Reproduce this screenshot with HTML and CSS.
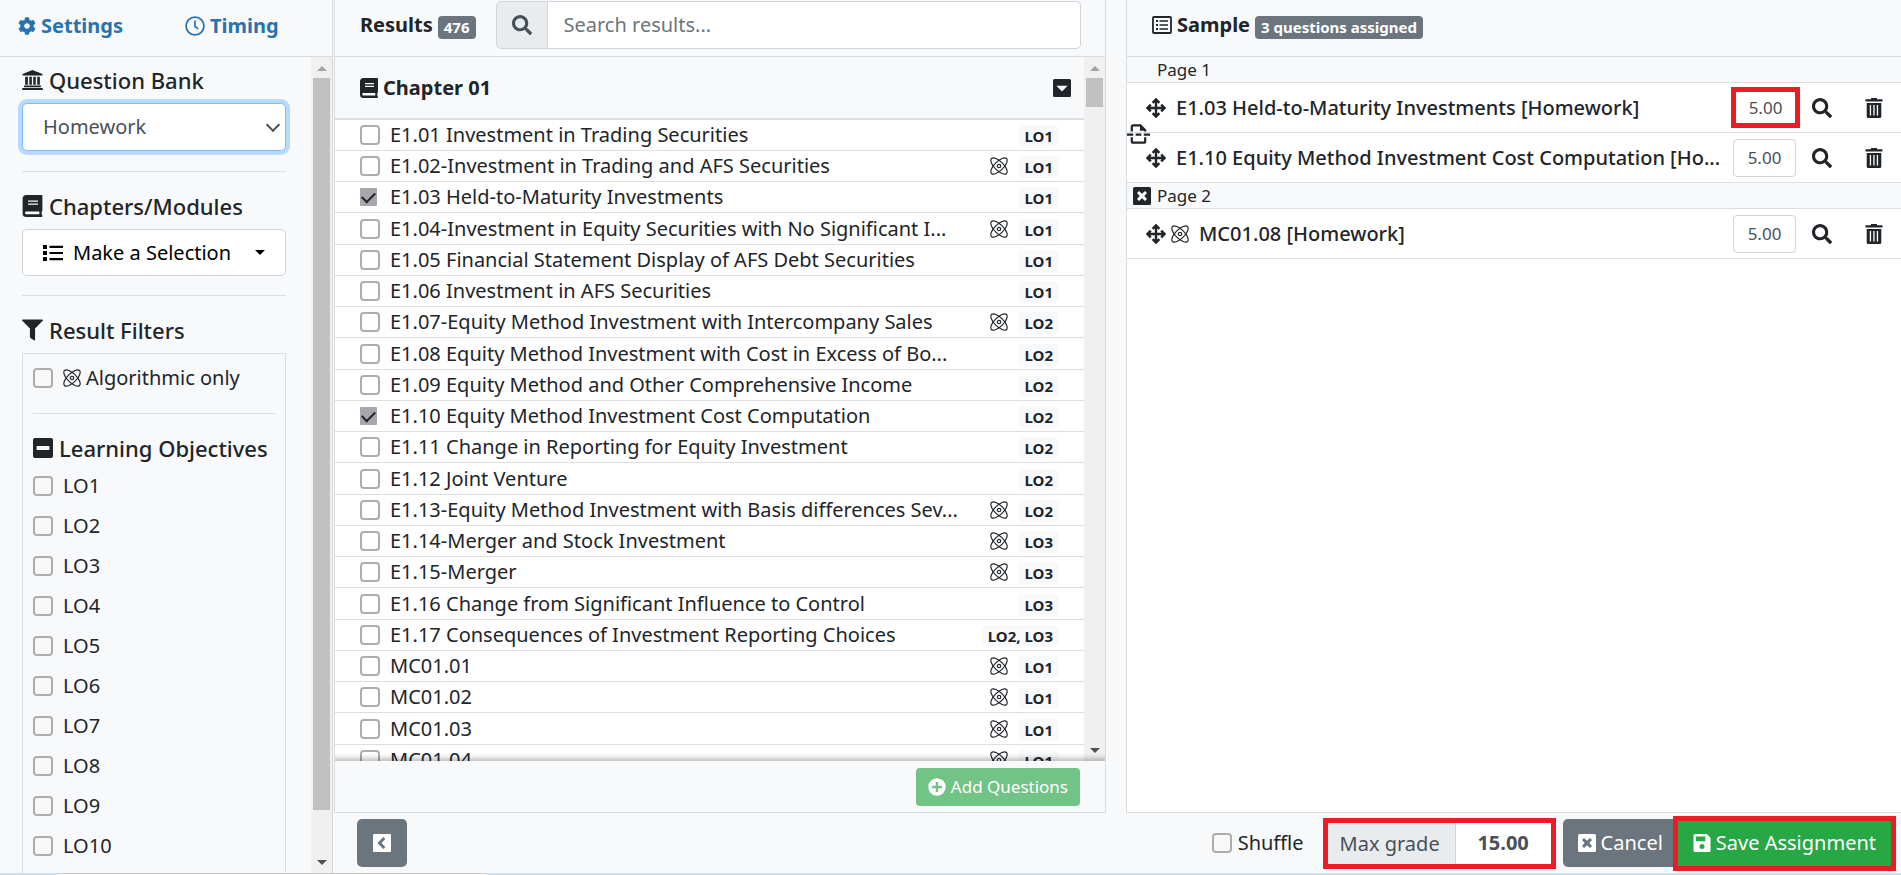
FILE: index.html
```
<!DOCTYPE html>
<html lang="en">
<head>
  <meta charset="utf-8">
  <meta name="viewport" content="width=device-width, initial-scale=1">
  <title>Assignment Builder</title>
  <link rel="stylesheet" href="styles.css">
</head>
<body>
  <!-- icon sprite -->
  <svg class="sprite" aria-hidden="true">
    <symbol id="cog" viewBox="0 0 512 512"><path d="M487.4 315.7l-42.6-24.6c4.3-23.2 4.3-47 0-70.2l42.6-24.6c4.9-2.8 7.1-8.6 5.5-14-11.1-35.6-30-67.8-54.7-94.6-3.8-4.1-10-5.1-14.8-2.3L380.8 110c-17.9-15.4-38.5-27.3-60.8-35.1V25.8c0-5.6-3.9-10.5-9.4-11.7-36.7-8.2-74.3-7.8-109.2 0-5.5 1.2-9.4 6.1-9.4 11.7V75c-22.2 7.9-42.8 19.8-60.8 35.1L88.7 85.5c-4.9-2.8-11-1.9-14.8 2.3-24.7 26.7-43.6 58.9-54.7 94.6-1.7 5.4.6 11.2 5.5 14L67.3 221c-4.3 23.2-4.3 47 0 70.2l-42.6 24.6c-4.9 2.8-7.1 8.6-5.5 14 11.1 35.6 30 67.8 54.7 94.6 3.8 4.1 10 5.1 14.8 2.3l42.6-24.6c17.9 15.4 38.5 27.3 60.8 35.1v49.2c0 5.6 3.9 10.5 9.4 11.7 36.7 8.2 74.3 7.8 109.2 0 5.5-1.2 9.4-6.1 9.4-11.7v-49.2c22.2-7.9 42.8-19.8 60.8-35.1l42.6 24.6c4.9 2.8 11 1.9 14.8-2.3 24.7-26.7 43.6-58.9 54.7-94.6 1.5-5.500-.7-11.300-5.600-14.100zM256 336c-44.1 0-80-35.9-80-80s35.9-80 80-80 80 35.9 80 80-35.9 80-80 80z"/></symbol>
    <symbol id="clock" viewBox="0 0 20 20"><circle cx="10" cy="10" r="8.9" fill="none" stroke="currentColor" stroke-width="1.8"/><path d="M10 4.500v6l3.300 2.400" fill="none" stroke="currentColor" stroke-width="1.700"/></symbol>
    <symbol id="bank" viewBox="0 0 20 20"><path d="M10 .5L19.500 4.200v1.500H.5V4.200zM3 7h2.600v7.500H3zM7 7h2.400v7.500H7zM10.700 7h2.400v7.500h-2.400zM14.500 7H17v7.500h-2.500zM2 15.300h16v1.500H2zM.2 17.700h19.600v1.800H.2z"/></symbol>
    <symbol id="book" viewBox="0 0 18 20"><path fill-rule="evenodd" d="M3.500 0h13.300c.7 0 1.200.5 1.200 1.200v12.600c0 .5-.2.800-.5 1-.3.900-.3 2.200 0 3.100.3.300.5.500.5.900v.2c0 .6-.5 1-1.200 1H3.500A3.500 3.500 0 0 1 0 16.500v-13A3.500 3.500 0 0 1 3.500 0zM5 5v1.200h9V5zM5 7.700v1.200h9V7.700zM3.500 15a1.300 1.300 0 0 0 0 2.600h11.800c-.1-.8-.1-1.700 0-2.600z"/></symbol>
    <symbol id="list" viewBox="0 0 20 17"><path d="M0 .5h4v4H0zM0 6.500h4v4H0zM0 12.500h4v4H0zM6.500 1.200h13.500v2.200H6.500zM6.500 7.400h13.500v2.200H6.500zM6.500 13.500h13.500v2.200H6.500z"/></symbol>
    <symbol id="filter" viewBox="0 0 22 22"><path d="M.8 0h20.400c.8 0 1 .8.5 1.400L13.700 9.500v11.600c0 .8-.7 1.100-1.300.7l-3.500-2.500c-.4-.3-.6-.6-.6-1.100V9.500L.3 1.400C-.2.800 0 0 .8 0z"/></symbol>
    <symbol id="atom" viewBox="0 0 20 20"><g fill="none" stroke="currentColor" stroke-width="1.300"><ellipse cx="10" cy="10" rx="11.800" ry="5" transform="rotate(45 10 10)"/><ellipse cx="10" cy="10" rx="11.800" ry="5" transform="rotate(-45 10 10)"/><circle cx="10" cy="10" r="1.900"/></g></symbol>
    <symbol id="minus-square" viewBox="0 0 20 20"><path fill-rule="evenodd" d="M2 0h16a2 2 0 0 1 2 2v16a2 2 0 0 1-2 2H2a2 2 0 0 1-2-2V2a2 2 0 0 1 2-2zM3.600 8v4h12.800V8z"/></symbol>
    <symbol id="search" viewBox="0 0 512 512"><path d="M505 442.7L405.3 343c-4.5-4.5-10.6-7-17-7H372c27.6-35.3 44-79.7 44-128C416 93.1 322.9 0 208 0S0 93.1 0 208s93.1 208 208 208c48.3 0 92.7-16.4 128-44v16.3c0 6.4 2.5 12.5 7 17l99.7 99.700c9.4 9.4 24.6 9.4 33.9 0l28.3-28.3c9.4-9.4 9.4-24.6.1-34zM208 336c-70.7 0-128-57.200-128-128 0-70.7 57.200-128 128-128 70.7 0 128 57.200 128 128 0 70.7-57.200 128-128 128z"/></symbol>
    <symbol id="caret-square" viewBox="0 0 18 18"><path fill-rule="evenodd" d="M1.500 0h15A1.500 1.500 0 0 1 18 1.500v15a1.500 1.500 0 0 1-1.500 1.500h-15A1.500 1.500 0 0 1 0 16.500v-15A1.500 1.500 0 0 1 1.500 0zM3.400 6.800L9 12.600l5.600-5.800z"/></symbol>
    <symbol id="list-alt" viewBox="0 0 20 18"><rect x="1" y="1" width="18" height="16" rx="1" fill="none" stroke="currentColor" stroke-width="1.800"/><path d="M4 4h2v2H4zM4 8h2v2H4zM4 12h2v2H4zM7.500 4.200H16v1.500H7.500zM7.500 8.200H16v1.500H7.500zM7.500 12.200H16v1.500H7.500z"/></symbol>
    <symbol id="move" viewBox="0 0 20 20"><path d="M10 1.500v17M1.500 10h17M6.600 4.800L10 1.400l3.400 3.400M6.600 15.200l3.400 3.400 3.400-3.400M4.800 6.600L1.400 10l3.400 3.400M15.200 6.600l3.400 3.400-3.400 3.400" fill="none" stroke="currentColor" stroke-width="2.400"/></symbol>
    <symbol id="page-break" viewBox="0 0 24 20"><path d="M5 7.500V2.500C5 1.600 5.500 1 6.400 1H14l5 5v1.500M5 13.500v4c0 .9.500 1.500 1.400 1.500h11.200c.9 0 1.400-.6 1.400-1.500v-4" fill="none" stroke="currentColor" stroke-width="2.300"/><path d="M13.500 1v5.500h5.500zM0 9.500h6.500v2.400H0zM9 9.500h6v2.400H9zM17.500 9.500H24v2.400h-6.500z"/></symbol>
    <symbol id="times-square" viewBox="0 0 18 18"><path fill-rule="evenodd" d="M1.500 0h15A1.500 1.500 0 0 1 18 1.500v15a1.500 1.500 0 0 1-1.500 1.500h-15A1.500 1.500 0 0 1 0 16.500v-15A1.500 1.500 0 0 1 1.500 0zM4 6l2.700 3L4 12l2 2 3-2.700 3 2.700 2-2-2.700-3L14 6l-2-2-3 2.700L6 4z"/></symbol>
    <symbol id="trash" viewBox="0 0 17 20"><path fill-rule="evenodd" d="M5.500 0h6v1.200H17v2.300H0V1.200h5.500zM1.200 5h14.600v13.500a1.500 1.500 0 0 1-1.500 1.500H2.700a1.500 1.500 0 0 1-1.500-1.500zM4.300 7v10.500h1.300V7zM7.800 7v10.500h1.300V7zM11.300 7v10.500h1.300V7z"/></symbol>
    <symbol id="plus-circle" viewBox="0 0 18 18"><path fill-rule="evenodd" d="M9 .3a8.700 8.700 0 1 1 0 17.400A8.700 8.700 0 0 1 9 .3zM7.800 4v3.800H4v2.400h3.800V14h2.400v-3.800H14V7.800h-3.800V4z"/></symbol>
    <symbol id="chevron-square" viewBox="0 0 18 18"><path fill-rule="evenodd" d="M1 0h16a1 1 0 0 1 1 1v16a1 1 0 0 1-1 1H1a1 1 0 0 1-1-1V1a1 1 0 0 1 1-1zM4.500 9l5.800 6 2-2-3.800-4 3.800-4-2-2z"/></symbol>
    <symbol id="save" viewBox="0 0 17 18"><path fill-rule="evenodd" d="M1.500 0h11.700L17 3.800v12.700a1.500 1.500 0 0 1-1.500 1.500h-14A1.500 1.500 0 0 1 0 16.500v-15A1.500 1.500 0 0 1 1.500 0zM2.400 2.400v4.800h9.400V2.400zM8.500 10a2.500 2.500 0 1 0 0 5 2.500 2.500 0 0 0 0-5z"/></symbol>
  </svg>

  <div class="app">
    <main class="columns">
      <aside class="sidebar">
        <nav class="tabs">
          <a href="#settings"><svg class="icon"><use href="#cog"/></svg>Settings</a>
          <a href="#timing"><svg class="icon wide"><use href="#clock"/></svg>Timing</a>
        </nav>
        <div class="scroll-area">
          <div class="filters">
            <section>
              <label class="heading" for="bank-select"><svg class="icon large"><use href="#bank"/></svg>Question Bank</label>
              <div class="select-wrap">
                <select id="bank-select"><option>Homework</option></select>
              </div>
            </section>
            <section>
              <h2 class="heading"><svg class="icon large"><use href="#book"/></svg>Chapters/Modules</h2>
              <button type="button" class="picker"><svg class="icon wide"><use href="#list"/></svg>Make a Selection<i class="caret"></i></button>
            </section>
            <section>
              <h2 class="heading"><svg class="icon large"><use href="#filter"/></svg>Result Filters</h2>
              <div class="filter-box">
                <label class="option algorithmic"><input type="checkbox"><svg class="icon"><use href="#atom"/></svg>Algorithmic only</label>
                <h2 class="heading"><svg class="icon wide"><use href="#minus-square"/></svg>Learning Objectives</h2>
                <label class="option"><input type="checkbox">LO1</label>
                <label class="option"><input type="checkbox">LO2</label>
                <label class="option"><input type="checkbox">LO3</label>
                <label class="option"><input type="checkbox">LO4</label>
                <label class="option"><input type="checkbox">LO5</label>
                <label class="option"><input type="checkbox">LO6</label>
                <label class="option"><input type="checkbox">LO7</label>
                <label class="option"><input type="checkbox">LO8</label>
                <label class="option"><input type="checkbox">LO9</label>
                <label class="option"><input type="checkbox">LO10</label>
              </div>
            </section>
          </div>
          <div class="scrollbar"><i class="up"></i><div class="track"><div class="thumb thumb-long"></div></div><i class="down"></i></div>
        </div>
      </aside>

      <section class="results">
        <header class="panel-header">
          <h1>Results</h1><span class="badge">476</span>
          <div class="search">
            <label for="search-input" title="Search"><svg class="icon wide"><use href="#search"/></svg></label>
            <input type="text" id="search-input" placeholder="Search results...">
          </div>
        </header>
        <div class="scroll-area">
          <div class="result-list">
            <div class="chapter">
              <svg class="icon book"><use href="#book"/></svg>
              <h2>Chapter 01</h2>
              <button type="button" aria-label="Collapse"><svg class="icon"><use href="#caret-square"/></svg></button>
            </div>
            <ul class="questions">
              <li><label><input type="checkbox">E1.01 Investment in Trading Securities</label><b>LO1</b></li>
              <li><label><input type="checkbox">E1.02-Investment in Trading and AFS Securities</label><svg class="icon"><use href="#atom"/></svg><b>LO1</b></li>
              <li><label><input type="checkbox" checked disabled>E1.03 Held-to-Maturity Investments</label><b>LO1</b></li>
              <li><label><input type="checkbox">E1.04-Investment in Equity Securities with No Significant I...</label><svg class="icon"><use href="#atom"/></svg><b>LO1</b></li>
              <li><label><input type="checkbox">E1.05 Financial Statement Display of AFS Debt Securities</label><b>LO1</b></li>
              <li><label><input type="checkbox">E1.06 Investment in AFS Securities</label><b>LO1</b></li>
              <li><label><input type="checkbox">E1.07-Equity Method Investment with Intercompany Sales</label><svg class="icon"><use href="#atom"/></svg><b>LO2</b></li>
              <li><label><input type="checkbox">E1.08 Equity Method Investment with Cost in Excess of Bo...</label><b>LO2</b></li>
              <li><label><input type="checkbox">E1.09 Equity Method and Other Comprehensive Income</label><b>LO2</b></li>
              <li><label><input type="checkbox" checked disabled>E1.10 Equity Method Investment Cost Computation</label><b>LO2</b></li>
              <li><label><input type="checkbox">E1.11 Change in Reporting for Equity Investment</label><b>LO2</b></li>
              <li><label><input type="checkbox">E1.12 Joint Venture</label><b>LO2</b></li>
              <li><label><input type="checkbox">E1.13-Equity Method Investment with Basis differences Sev...</label><svg class="icon"><use href="#atom"/></svg><b>LO2</b></li>
              <li><label><input type="checkbox">E1.14-Merger and Stock Investment</label><svg class="icon"><use href="#atom"/></svg><b>LO3</b></li>
              <li><label><input type="checkbox">E1.15-Merger</label><svg class="icon"><use href="#atom"/></svg><b>LO3</b></li>
              <li><label><input type="checkbox">E1.16 Change from Significant Influence to Control</label><b>LO3</b></li>
              <li><label><input type="checkbox">E1.17 Consequences of Investment Reporting Choices</label><b>LO2, LO3</b></li>
              <li><label><input type="checkbox">MC01.01</label><svg class="icon"><use href="#atom"/></svg><b>LO1</b></li>
              <li><label><input type="checkbox">MC01.02</label><svg class="icon"><use href="#atom"/></svg><b>LO1</b></li>
              <li><label><input type="checkbox">MC01.03</label><svg class="icon"><use href="#atom"/></svg><b>LO1</b></li>
              <li><label><input type="checkbox">MC01.04</label><svg class="icon"><use href="#atom"/></svg><b>LO1</b></li>
            </ul>
          </div>
          <div class="scrollbar"><i class="up"></i><div class="track"><div class="thumb thumb-short"></div></div><i class="down"></i></div>
        </div>
        <footer class="results-footer">
          <button type="button" class="add"><svg class="icon"><use href="#plus-circle"/></svg>Add Questions</button>
        </footer>
      </section>

      <section class="sample">
        <header class="panel-header">
          <svg class="icon wide"><use href="#list-alt"/></svg>
          <h1>Sample</h1><span class="badge">3 questions assigned</span>
        </header>
        <h3 class="page-row">Page 1</h3>
        <div class="item">
          <svg class="icon wide"><use href="#move"/></svg>
          <span class="title">E1.03 Held-to-Maturity Investments [Homework]</span>
          <input type="text" class="marked" value="5.00" aria-label="Points for E1.03">
          <button type="button" aria-label="Preview"><svg class="icon wide"><use href="#search"/></svg></button>
          <button type="button" aria-label="Remove"><svg class="icon wide"><use href="#trash"/></svg></button>
          <svg class="page-break"><use href="#page-break"/></svg>
        </div>
        <div class="item">
          <svg class="icon wide"><use href="#move"/></svg>
          <span class="title">E1.10 Equity Method Investment Cost Computation [Ho...</span>
          <input type="text" value="5.00" aria-label="Points for E1.10">
          <button type="button" aria-label="Preview"><svg class="icon wide"><use href="#search"/></svg></button>
          <button type="button" aria-label="Remove"><svg class="icon wide"><use href="#trash"/></svg></button>
        </div>
        <h3 class="page-row"><button type="button" aria-label="Remove page"><svg class="icon"><use href="#times-square"/></svg></button>Page 2</h3>
        <div class="item">
          <svg class="icon wide"><use href="#move"/></svg>
          <svg class="icon"><use href="#atom"/></svg>
          <span class="title">MC01.08 [Homework]</span>
          <input type="text" value="5.00" aria-label="Points for MC01.08">
          <button type="button" aria-label="Preview"><svg class="icon wide"><use href="#search"/></svg></button>
          <button type="button" aria-label="Remove"><svg class="icon wide"><use href="#trash"/></svg></button>
        </div>
      </section>

      <footer class="actions">
        <button type="button" class="btn back" aria-label="Back"><svg class="icon"><use href="#chevron-square"/></svg></button>
        <label class="shuffle"><input type="checkbox">Shuffle</label>
        <div class="grade marked">
          <label for="max-grade">Max grade</label>
          <input type="text" id="max-grade" value="15.00">
        </div>
        <div class="btn-group">
          <button type="button" class="btn cancel"><svg class="icon"><use href="#times-square"/></svg>Cancel</button>
          <button type="button" class="btn save marked"><svg class="icon"><use href="#save"/></svg>Save Assignment</button>
        </div>
      </footer>
    </main>
    <div class="page-edge"><i></i></div>
  </div>
</body>
</html>
```
FILE: styles.css
```
* {
  box-sizing: border-box;
}
body {
  margin: 0;
  font-family: "Noto Sans", "Open Sans", sans-serif;
  font-size: 20px;
  line-height: 30px;
  color: #212529;
  background-color: #f8f9fb;
}
h1, h2, h3 {
  margin: 0;
  font-size: 20px;
}
button, input, select {
  font: inherit;
  color: inherit;
}
button {
  display: flex;
  align-items: center;
  padding: 0;
  border: 0;
  background: none;
  cursor: pointer;
}
.sprite {
  display: none;
}
.icon {
  flex: none;
  width: 18px;
  height: 18px;
  fill: currentColor;
}
.icon.wide {
  width: 20px;
  height: 20px;
}
.icon.large {
  width: 21px;
  height: 22px;
}
input[type="checkbox"] {
  flex: none;
  appearance: none;
  width: 20px;
  height: 20px;
  margin: 0;
  border: 2px solid #adadad;
  border-radius: 4px;
}
input[type="checkbox"]:checked {
  display: grid;
  place-items: center;
  width: 17px;
  height: 18px;
  margin-right: 3px;
  border: 0;
  border-radius: 1px;
  background-color: #a6a8ab;
}
input[type="checkbox"]:checked::after {
  content: "";
  width: 11px;
  height: 6px;
  border-left: 2px solid #212529;
  border-bottom: 2px solid #212529;
  transform: translateY(-1px) rotate(-45deg);
}
.marked {
  outline: 5px solid #ed1c24;
}

/* frame */
.app {
  display: flex;
  flex-direction: column;
  height: 100vh;
}
.columns {
  flex: 1;
  min-height: 0;
  display: grid;
  grid-template-columns: 334px 792fr 775fr;
  grid-template-rows: minmax(0, 1fr) 60px;
}
.panel-header, .tabs {
  flex: none;
  display: flex;
  align-items: center;
  height: 57px;
  border-bottom: 1px solid #d9dbde;
}
.panel-header {
  padding: 0 24px 6px 25px;
}
.panel-header > .icon {
  margin-right: 5px;
}
.badge {
  margin: 4px 0 0 5px;
  padding: 0 6px;
  border-radius: 4px;
  background-color: #6c757d;
  color: #fff;
  font-size: 15px;
  font-weight: bold;
  line-height: 23px;
}
.scroll-area {
  flex: 1;
  min-height: 0;
  display: flex;
  overflow: hidden;
}

/* scrollbars */
.scrollbar {
  flex: none;
  display: flex;
  flex-direction: column;
  width: 21px;
  padding: 9px 2px 8px;
  background-color: #f0f0f0;
}
.scrollbar .up, .scrollbar .down {
  align-self: center;
  border: 5px solid transparent;
}
.scrollbar .up {
  border-top: 0;
  border-bottom-color: #a3a3a3;
}
.scrollbar .down {
  border-bottom: 0;
  border-top-color: #505050;
}
.track {
  flex: 1;
  padding: 7px 0;
}
.thumb {
  background-color: #c1c1c1;
}
.thumb-long {
  height: calc(100% - 43px);
}
.thumb-short {
  height: 29px;
}

/* sidebar */
.sidebar {
  grid-row: 1 / 3;
  display: flex;
  flex-direction: column;
  min-height: 0;
  width: 333px;
  border-right: 1px solid #d5d7da;
}
.tabs {
  gap: 62px;
  padding: 0 18px 5px;
}
.tabs a {
  display: flex;
  align-items: center;
  gap: 5px;
  color: #2673b0;
  font-weight: bold;
  text-decoration: none;
}
.filters {
  flex: 1;
  padding: 0 25px 0 22px;
}
.filters section {
  height: 124px;
  padding-top: 7px;
  border-bottom: 1px solid #dcdee1;
}
.filters section:first-child {
  height: 115px;
}
.filters section + section {
  padding-top: 18px;
}
.filters section:last-child {
  height: auto;
  border: 0;
}
.heading {
  display: flex;
  align-items: center;
  gap: 6px;
  font-size: 22px;
  font-weight: 500;
  line-height: 32px;
}
.select-wrap {
  position: relative;
  margin-top: 7px;
}
.select-wrap::after {
  content: "";
  position: absolute;
  top: 17px;
  right: 8px;
  width: 8px;
  height: 8px;
  border-right: 2px solid #495057;
  border-bottom: 2px solid #495057;
  transform: rotate(45deg);
  pointer-events: none;
}
select {
  appearance: none;
  width: 100%;
  height: 48px;
  padding: 0 20px;
  border: 1px solid #80bdff;
  border-radius: 5px;
  background-color: #fff;
  color: #495057;
  box-shadow: 0 0 0 4px #b8dafb;
}
.picker {
  width: 100%;
  height: 47px;
  margin-top: 7px;
  padding: 0 20px;
  border: 1px solid #ced4da;
  border-radius: 5px;
  background-color: #fff;
  color: #000;
}
.picker .icon {
  margin-right: 10px;
}
.caret {
  margin-left: auto;
  border: 5px solid transparent;
  border-top-color: #000;
  border-bottom: 0;
}
.filter-box {
  margin-top: 7px;
  padding: 0 10px 20px;
  border: 1px solid #dcdee1;
}
.option {
  display: flex;
  align-items: center;
  gap: 10px;
  height: 40px;
}
.option .icon {
  margin-right: -5px;
}
.algorithmic {
  height: 60px;
  padding-bottom: 12px;
  border-bottom: 1px solid #dcdee1;
}
.filter-box .heading {
  padding: 18px 0 2px;
}

/* results */
.results {
  display: flex;
  flex-direction: column;
  min-width: 0;
  margin-right: 20px;
  border: 1px solid #d9dbde;
  border-top: 0;
}
.search {
  flex: 1;
  display: flex;
  height: 48px;
  margin-left: 20px;
}
.search label {
  display: flex;
  align-items: center;
  padding: 0 15px;
  border: 1px solid #ced4da;
  border-radius: 5px 0 0 5px;
  background-color: #e9ecef;
  color: #495057;
}
.search input {
  flex: 1;
  min-width: 0;
  padding: 0 16px;
  border: 1px solid #ced4da;
  border-left: 0;
  border-radius: 0 5px 5px 0;
}
.search input::placeholder {
  color: #6c757d;
}
.result-list {
  flex: 1;
  min-width: 0;
}
.chapter {
  display: flex;
  align-items: center;
  gap: 5px;
  height: 63px;
  padding: 0 13px 0 25px;
  border-bottom: 2px solid #dcdee1;
}
.chapter .book {
  height: 20px;
}
.chapter button {
  margin-left: auto;
}
.questions {
  margin: 0;
  padding: 0;
  list-style: none;
  background-color: #fff;
}
.questions li {
  display: flex;
  align-items: center;
  height: 31px;
  padding: 0 25px;
  border-bottom: 1px solid #dcdee1;
}
.questions li:nth-child(4n) {
  height: 32px;
}
.questions label {
  flex: 1;
  display: flex;
  align-items: center;
  gap: 10px;
  white-space: nowrap;
}
.questions b {
  margin: 2px 0 0 10px;
  padding: 0 6px;
  border-radius: 5px;
  background-color: #f8f9fb;
  font-size: 15px;
  line-height: 22px;
}
.results-footer {
  position: relative;
  display: flex;
  justify-content: flex-end;
  align-items: center;
  height: 51px;
  padding: 0 25px;
  background-color: #f8f9fb;
  box-shadow: 0 0 5px 3px rgba(0, 0, 0, 0.25);
  clip-path: inset(-8px 0 0 0);
}
.add {
  gap: 5px;
  height: 38px;
  padding: 0 12px;
  border-radius: 4px;
  background-color: #71c486;
  color: #fff;
  font-size: 17px;
}

/* sample */
.sample {
  min-width: 0;
  border-left: 1px solid #d9dbde;
  border-bottom: 1px solid #d9dbde;
  background-color: #fff;
}
.sample .panel-header {
  background-color: #f8f9fb;
}
.page-row {
  display: flex;
  align-items: center;
  height: 26px;
  padding-left: 30px;
  border-bottom: 1px solid #dcdee1;
  background-color: #f8f9fb;
  font-size: 17px;
  font-weight: normal;
}
.page-row button {
  margin: 0 6px 0 -24px;
}
.item {
  position: relative;
  display: flex;
  align-items: center;
  height: 50px;
  padding: 0 17px 0 19px;
  border-bottom: 1px solid #dcdee1;
}
.item > .icon + .icon {
  margin-left: 5px;
}
.title {
  flex: 1;
  min-width: 0;
  margin-left: 10px;
  overflow: hidden;
  font-weight: 500;
  white-space: nowrap;
}
.item input {
  width: 63px;
  height: 38px;
  border: 1px solid #ced4da;
  border-radius: 4px;
  background-color: #fff;
  color: #495057;
  font-size: 17px;
  text-align: center;
}
.item .marked {
  width: 59px;
  height: 31px;
  margin-right: 1px;
  border: 0;
  border-radius: 0;
}
.item button {
  margin-left: 16px;
}
.item button + button {
  margin-left: 32px;
}
.page-break {
  position: absolute;
  left: 0;
  bottom: -12px;
  z-index: 1;
  width: 23px;
  height: 20px;
  fill: currentColor;
}

/* bottom bar */
.actions {
  grid-column: 2 / 4;
  display: flex;
  align-items: center;
  padding: 0 10px 0 23px;
}
.btn {
  gap: 5px;
  height: 48px;
  padding: 0 15px;
  border-radius: 5px;
  background-color: #6c757d;
  color: #fff;
}
.shuffle {
  display: flex;
  align-items: center;
  gap: 6px;
  margin-left: auto;
}
.grade {
  display: flex;
  width: 223px;
  height: 41px;
  margin: 0 12px 0 24px;
}
.grade label {
  padding: 0 15px 0 12px;
  border-right: 1px solid #ced4da;
  background-color: #e9ecef;
  color: #495057;
  line-height: 41px;
}
.grade input {
  flex: 1;
  min-width: 0;
  padding: 0;
  border: 0;
  background-color: #fff;
  color: #495057;
  font-weight: bold;
  text-align: center;
}
.btn-group {
  display: flex;
  align-items: center;
}
.cancel {
  border-radius: 5px 0 0 5px;
}
.save {
  height: 45px;
  border-radius: 0;
  background-color: #28a745;
}
.back {
  justify-content: center;
  width: 50px;
}
.page-edge {
  height: 2px;
  padding-left: 57px;
  background-color: #d0e0ec;
}
.page-edge i {
  display: block;
  width: 430px;
  height: 2px;
  border-top: 1px solid #c5c7ca;
  background-color: #fff;
}
```
